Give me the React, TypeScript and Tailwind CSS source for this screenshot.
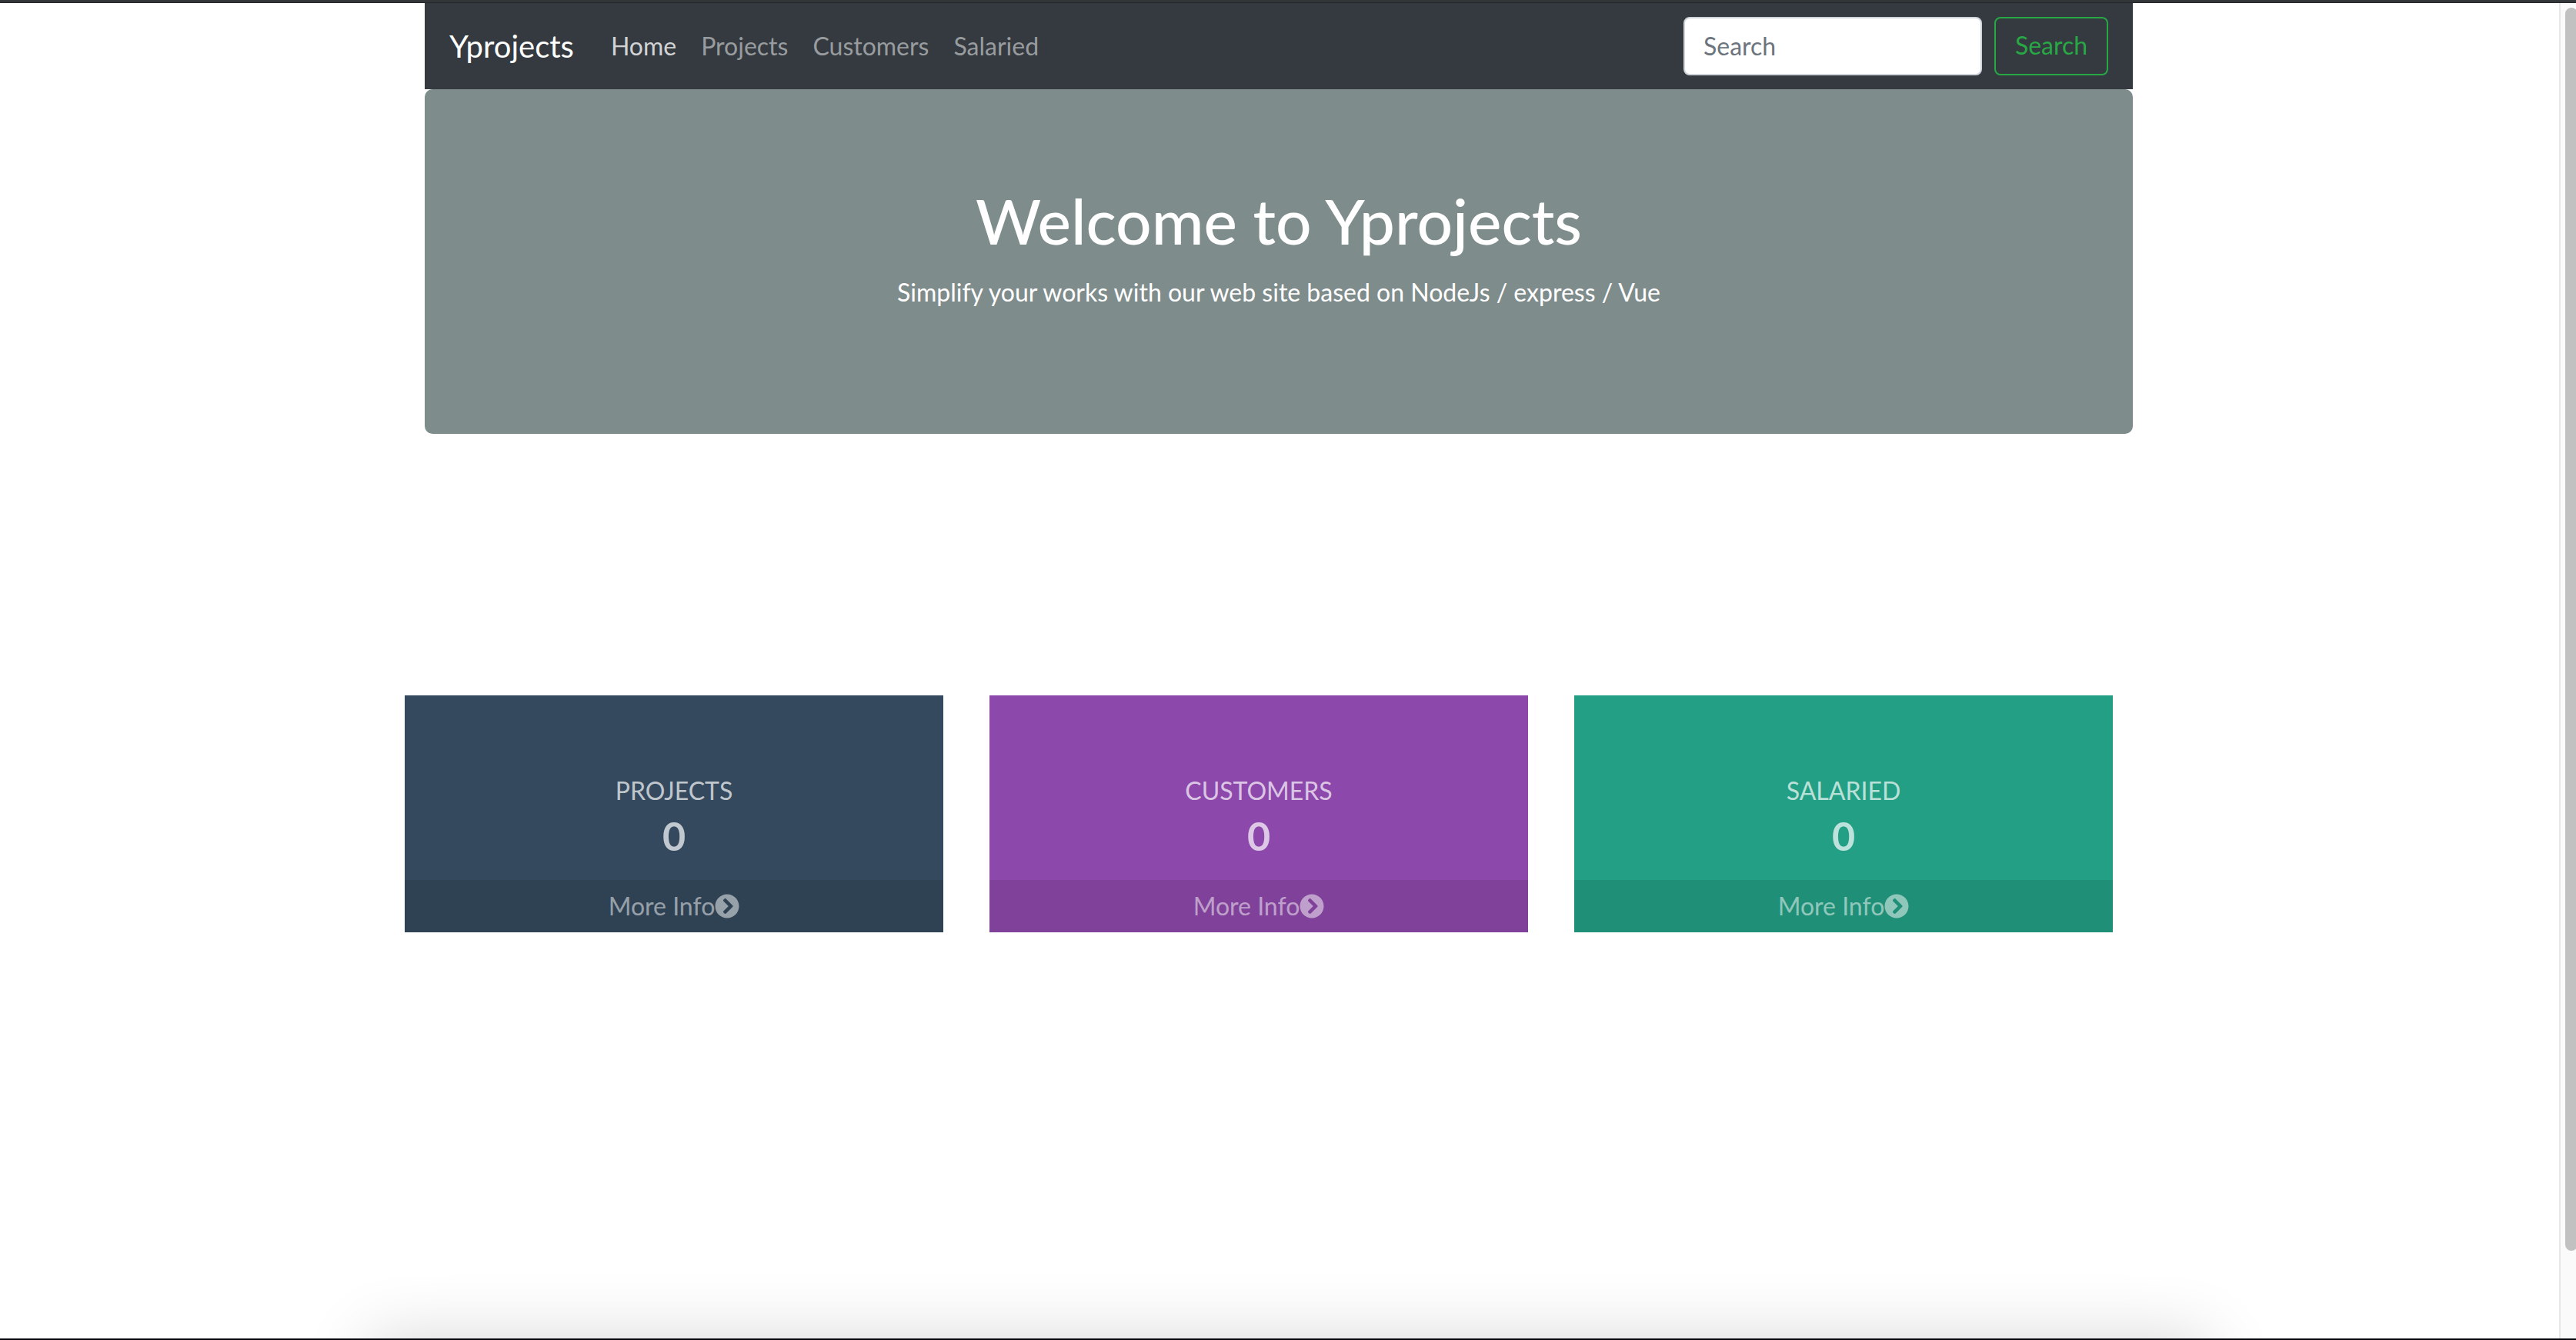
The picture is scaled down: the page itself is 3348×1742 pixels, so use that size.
import React from "react";
import { FaChevronCircleRight } from "react-icons/fa";

const links = [
  { label: "Home", active: true },
  { label: "Projects", active: false },
  { label: "Customers", active: false },
  { label: "Salaried", active: false },
];

const cards = [
  { title: "PROJECTS", count: 0, color: "bg-[#34495e]", footer: "bg-[#2f4254]" },
  { title: "CUSTOMERS", count: 0, color: "bg-[#8c48ab]", footer: "bg-[#7f4199]" },
  { title: "SALARIED", count: 0, color: "bg-[#239f85]", footer: "bg-[#208f77]" },
];

function Navbar() {
  return (
    <nav className="flex h-28 items-center bg-[#343a40] px-8">
      <a href="#" className="mr-12 text-[40px] leading-[60px] text-white">
        Yprojects
      </a>
      <ul className="flex flex-1 gap-8 text-[32px] leading-[48px]">
        {links.map((l) => (
          <li key={l.label}>
            <a href="#" className={l.active ? "text-[#d2d3d5]" : "text-[#999c9f]"}>
              {l.label}
            </a>
          </li>
        ))}
      </ul>
      <form className="flex gap-4 text-[32px] leading-[48px]">
        <input
          type="search"
          aria-label="Search"
          placeholder="Search"
          className="h-[76px] w-[388px] rounded-lg border-2 border-[#ced4da] bg-white px-6 pb-0.5 text-[#495057] placeholder:text-[#6c757d]"
        />
        <button
          type="button"
          className="h-[76px] w-[148px] rounded-lg border-2 border-[#28a745] pb-0.5 text-[#28a745]"
        >
          Search
        </button>
      </form>
    </nav>
  );
}

function Hero() {
  return (
    <header className="rounded-[10px] bg-[#7f8c8c] px-16 pt-[122px] pb-40 text-center text-white">
      <h1 className="mb-[22px] text-[82px] leading-[96px] font-medium">Welcome to Yprojects</h1>
      <p className="text-[32px] leading-[48px]">
        Simplify your works with our web site based on NodeJs / express / Vue
      </p>
    </header>
  );
}

function StatCard({ title, count, color, footer }: (typeof cards)[number]) {
  return (
    <section className={`text-center ${color}`}>
      <div className="h-60 pt-[100px] text-white/70">
        <h2 className="text-[32px] leading-[48px]">{title}</h2>
        <p className="mt-1 text-[52px] leading-[60px] font-bold">{count}</p>
      </div>
      <a
        href="#"
        className={`flex h-[68px] items-center justify-center text-[32px] leading-[48px] text-white/50 ${footer}`}
      >
        More Info
        <FaChevronCircleRight className="size-8" />
      </a>
    </section>
  );
}

export default function App() {
  return (
    <div className="flex h-screen flex-col overflow-hidden border-b-2 border-[#05050d] bg-white font-[Lato,sans-serif]">
      <div className="h-1 shrink-0 border-b border-[#252729] bg-[#323639]" />
      <div className="flex min-h-0 flex-1">
        <main className="relative flex-1 overflow-hidden pr-0.5">
          <div className="mx-auto max-w-[2220px]">
            <Navbar />
            <Hero />
          </div>
          <div className="mx-auto mt-[340px] max-w-[2220px]">
            <div className="mr-[26px] -ml-[26px] grid grid-cols-3 gap-[60px]">
              {cards.map((c) => (
                <StatCard key={c.title} {...c} />
              ))}
            </div>
          </div>
          <div className="absolute top-full right-[456px] left-[480px] h-40 shadow-[0_0_88px_rgba(0,0,0,0.16)]" />
        </main>
        <div className="w-[22px] shrink-0 overflow-hidden border-l-2 border-[#e7e7e7] bg-[#fafafa] pt-[6px] pl-[6px]">
          <div className="h-[calc(100%-114px)] w-4 rounded-full bg-[#c1c1c1]" />
        </div>
      </div>
    </div>
  );
}
